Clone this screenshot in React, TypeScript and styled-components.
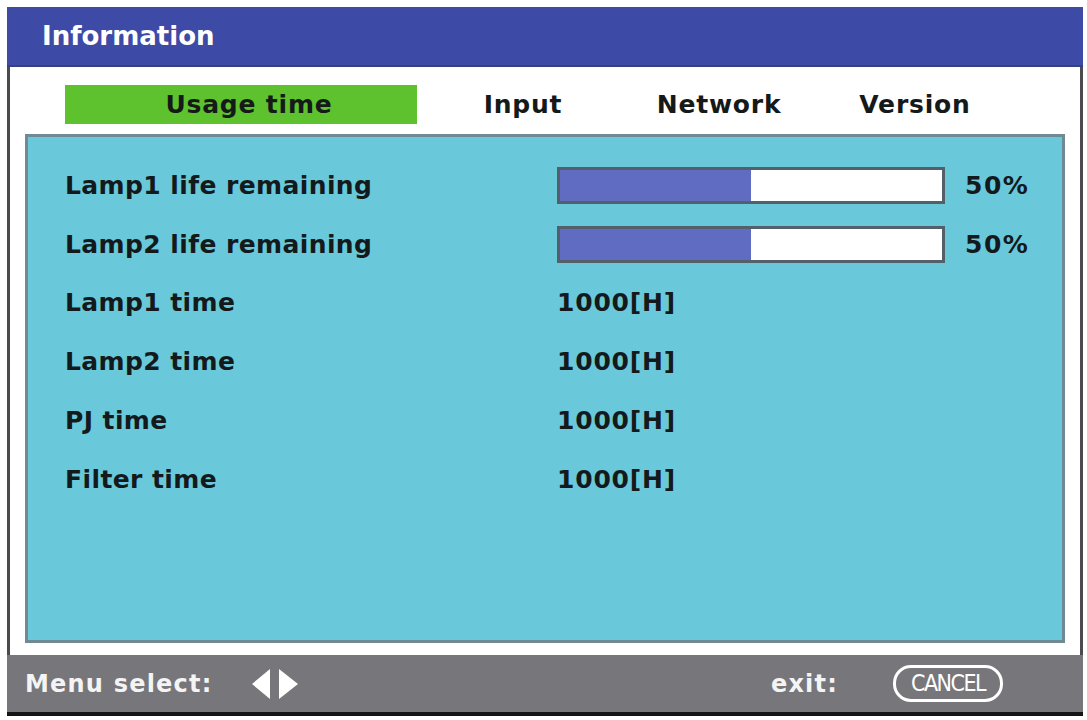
import React, { FunctionComponent } from 'react';
import styled, { createGlobalStyle } from 'styled-components';

type LifeRow = { label: string; percent: number };
type TimeRow = { label: string; hours: number };

const lifeRows: LifeRow[] = [
  { label: 'Lamp1 life remaining', percent: 50 },
  { label: 'Lamp2 life remaining', percent: 50 },
];

const timeRows: TimeRow[] = [
  { label: 'Lamp1 time', hours: 1000 },
  { label: 'Lamp2 time', hours: 1000 },
  { label: 'PJ time', hours: 1000 },
  { label: 'Filter time', hours: 1000 },
];

const tabs = ['Usage time', 'Input', 'Network', 'Version'];

const GlobalStyle = createGlobalStyle`
  html, body {
    margin: 0;
    background: #ffffff;
  }
  body {
    font-family: "DejaVu Sans", "Liberation Sans", sans-serif;
  }
`;

const App: FunctionComponent = () => (
  <>
    <GlobalStyle />
    <Page>
      <Window>
        <TitleBar>Information</TitleBar>
        <Body>
          <TabRow>
            {tabs.map((tab, i) => (
              <Tab key={tab} active={i === 0}>
                {tab}
              </Tab>
            ))}
          </TabRow>
          <Panel>
            {lifeRows.map((row) => (
              <Row key={row.label}>
                <Label>{row.label}</Label>
                <Bar>
                  <BarFill style={{ width: `${row.percent}%` }} />
                </Bar>
                <Percent>{row.percent}%</Percent>
              </Row>
            ))}
            {timeRows.map((row) => (
              <Row key={row.label}>
                <Label>{row.label}</Label>
                <Value>{row.hours}[H]</Value>
              </Row>
            ))}
          </Panel>
        </Body>
        <Footer>
          <FooterText>Menu select:</FooterText>
          <Arrows width="46" height="30" viewBox="0 0 46 30">
            <polygon points="18,0 18,30 0,15" fill="#ffffff" />
            <polygon points="27,0 27,30 46,15" fill="#ffffff" />
          </Arrows>
          <Spacer />
          <FooterText>exit:</FooterText>
          <CancelKey>CANCEL</CancelKey>
        </Footer>
      </Window>
    </Page>
  </>
);

const Page = styled.div`
  padding: 7px 4px 4px 7px;
  width: 1087px;
  height: 720px;
  box-sizing: border-box;
`;

const Window = styled.div`
  width: 1076px;
  display: flex;
  flex-direction: column;
`;

const TitleBar = styled.div`
  height: 60px;
  background: #3d4aa6;
  color: #ffffff;
  font-weight: 700;
  font-size: 26px;
  line-height: 58px;
  padding-left: 35px;
  box-sizing: border-box;
  border-bottom: 2px solid #34407f;
`;

const Body = styled.div`
  background: #ffffff;
  border-left: 3px solid #4a4a4f;
  border-right: 3px solid #4a4a4f;
  padding: 18px 15px 12px 15px;
  height: 588px;
  box-sizing: border-box;
  display: flex;
  flex-direction: column;
`;

const TabRow = styled.div`
  display: flex;
  padding-left: 40px;
  height: 39px;
`;

const Tab = styled.div<{ active?: boolean }>`
  width: ${({ active }) => (active ? '352px' : '196px')};
  margin-right: ${({ active }) => (active ? '8px' : '0')};
  padding-left: ${({ active }) => (active ? '16px' : '0')};
  box-sizing: border-box;
  background: ${({ active }) => (active ? '#5ec22f' : 'transparent')};
  color: #151a18;
  font-weight: 700;
  font-size: 25px;
  letter-spacing: 0.8px;
  line-height: 39px;
  text-align: center;
`;

const Panel = styled.div`
  margin-top: 10px;
  flex: 1;
  background: #69c9da;
  border: 3px solid #6f8a93;
  padding: 19px 0 0 37px;
`;

const Row = styled.div`
  display: flex;
  align-items: center;
  height: 58.8px;
`;

const Label = styled.div`
  width: 492px;
  color: #141a1c;
  font-weight: 700;
  font-size: 25px;
  letter-spacing: 0.4px;
`;

const Bar = styled.div`
  width: 388px;
  height: 37px;
  box-sizing: border-box;
  border: 3px solid #53606a;
  background: #ffffff;
  display: flex;
`;

const BarFill = styled.div`
  background: #5f6cc2;
  height: 100%;
`;

const Percent = styled.div`
  margin-left: 20px;
  color: #141a1c;
  font-weight: 700;
  font-size: 25px;
  letter-spacing: 1.5px;
`;

const Value = styled.div`
  color: #141a1c;
  font-weight: 700;
  font-size: 25px;
  letter-spacing: 0.8px;
`;

const Footer = styled.div`
  height: 61px;
  background: #77767b;
  border-bottom: 4px solid #141414;
  box-sizing: border-box;
  display: flex;
  align-items: center;
  padding: 0 80px 0 18px;
`;

const FooterText = styled.div`
  color: #f4f4f4;
  font-weight: 700;
  font-size: 24px;
  letter-spacing: 1.2px;
`;

const Arrows = styled.svg`
  margin-left: 40px;
  display: block;
`;

const Spacer = styled.div`
  flex: 1;
`;

const CancelKey = styled.div`
  margin-left: 55px;
  width: 110px;
  height: 37px;
  box-sizing: border-box;
  border: 3px solid #ffffff;
  border-radius: 18px;
  color: #ffffff;
  font-family: "DejaVu Sans Condensed", "Liberation Sans Narrow", sans-serif;
  font-size: 23px;
  line-height: 31px;
  text-align: center;
  letter-spacing: -1.5px;
`;

export default App;
